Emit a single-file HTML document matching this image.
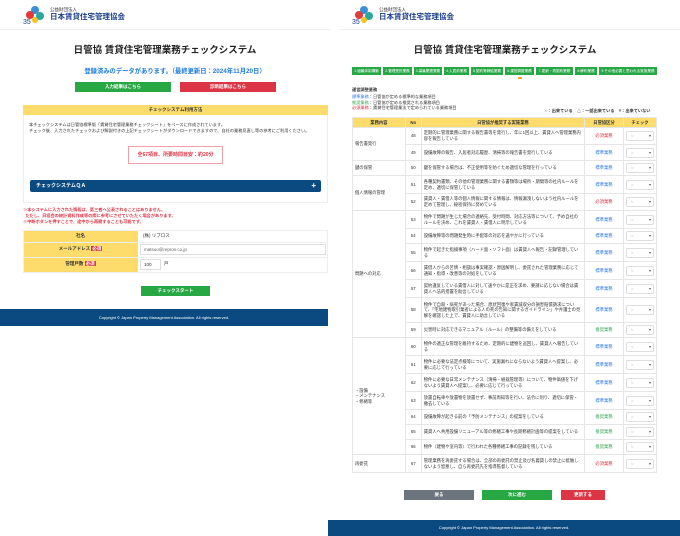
<!DOCTYPE html>
<html><head><meta charset="utf-8"><style>
*{margin:0;padding:0;box-sizing:border-box}
body{width:680px;height:536px;background:#fff;position:relative;overflow:hidden;font-family:"Liberation Sans","Noto Sans CJK JP",sans-serif;color:#333}
.a{position:absolute}
.c{text-align:center}
.hdr{height:30px;border-bottom:1px solid #eee;background:#fff}
.logo{font-size:4.5px;line-height:5px}
.logo b{display:block;font-size:7.5px;line-height:9px;color:#1c3f8c;font-weight:bold}
.title{font-size:9.5px;font-weight:bold;color:#222}
.btn{color:#fff;font-size:4.5px;text-align:center;line-height:10px;font-weight:bold}
.t{font-size:4.5px;line-height:6px}
.foot{background:#0b4a80;color:#fff;font-size:4px;text-align:center;line-height:17px}
table{border-collapse:collapse;position:absolute}
td,th{border:1px solid #e6e6e6;font-size:4.3px;line-height:5.6px;padding:0 2px;vertical-align:middle}
th{background:#fddc6c;font-weight:bold;text-align:center}
.sel{display:block;width:28px;height:10px;border:1px solid #ddd;border-radius:2px;font-size:4px;line-height:8px;padding-left:4px;color:#999;position:relative}
.sel:after{content:"▾";position:absolute;right:2px;top:0;color:#555}
.std{color:#2f7ae5}.rec{color:#3aa655}.req{color:#dc3545}
.tab{position:absolute;top:67px;height:8px;background:#28a745;color:#fff;font-size:3.6px;line-height:8px;text-align:center;white-space:nowrap;overflow:hidden}
</style></head><body>
<!-- LEFT PANEL -->
<div class="a hdr" style="left:0;top:0;width:330px"></div>
<svg class="a" style="left:22px;top:4px" width="26" height="22" viewBox="0 0 26 22"><circle cx="13" cy="6" r="4" fill="#3a8fd8"/><circle cx="8" cy="11" r="4" fill="#e23a3a"/><circle cx="18" cy="12" r="4" fill="#2ba5a0"/><circle cx="13" cy="16" r="3" fill="#f5c518"/><text x="1" y="20" font-size="7" fill="#1c3f8c" font-family="Liberation Sans">35</text></svg>
<div class="a logo" style="left:50px;top:7px">公益財団法人<b>日本賃貸住宅管理協会</b></div>
<div class="a title c" style="left:0;top:42px;width:330px">日管協 賃貸住宅管理業務チェックシステム</div>
<div class="a c" style="left:0;top:66px;width:350px;font-size:6.3px;font-weight:bold;color:#1e7be0">登録済みのデータがあります。（最終更新日：2024年11月20日）</div>
<div class="a btn" style="left:75px;top:82px;width:96px;background:#28a745">入力結果はこちら</div>
<div class="a btn" style="left:180px;top:82px;width:96px;background:#dc3545">診断結果はこちら</div>
<div class="a" style="left:23px;top:105px;width:305px;height:98px;border:1px solid #eee"></div>
<div class="a c t" style="left:23px;top:105px;width:305px;height:10px;line-height:10px;background:#fddc6c;font-weight:bold">チェックシステム利用方法</div>
<div class="a t" style="left:29px;top:122px;width:295px;font-size:4.2px">本チェックシステムは日管協標準版「賃貸住宅管理業務チェックシート」をベースに作成されています。<br>チェック後、入力されたチェックおよび解説付きの上記チェックシートがダウンロードできますので、自社の業務見直し等の参考にご利用ください。</div>
<div class="a c" style="left:128px;top:146px;width:95px;height:18px;border:1px solid #f2a0a8;color:#dc3545;font-size:5px;line-height:16px;font-weight:bold">全67項目、所要時間目安：約20分</div>
<div class="a" style="left:30px;top:180px;width:291px;height:12px;background:#0b4a80;border-radius:2px;color:#fff;font-size:5px;font-weight:bold;line-height:12px;padding-left:6px">チェックシステムＱＡ<span style="position:absolute;right:5px;font-size:8px">+</span></div>
<div class="a t" style="left:23px;top:207px;color:#dc3545;font-size:4.2px;font-weight:bold">※本システムに入力された情報は、第三者へ公表されることはありません。<br>&nbsp;&nbsp;ただし、日協会の統計資料作成等の際に参考にさせていただく場合があります。<br>※中断ボタンを押すことで、途中から再開することも可能です。</div>
<div class="a" style="left:23px;top:230px;width:115px;height:43px;background:#fddc6c"></div>
<div class="a" style="left:23px;top:230px;width:305px;height:43px;border:1px solid #eee"></div>
<div class="a" style="left:23px;top:242px;width:305px;border-top:1px solid #eee"></div>
<div class="a" style="left:23px;top:257px;width:305px;border-top:1px solid #eee"></div>
<div class="a t c" style="left:23px;top:233px;width:115px;font-weight:bold">社名</div>
<div class="a t c" style="left:23px;top:246px;width:115px;font-weight:bold">メールアドレス <span style="background:#dc3545;color:#fff;padding:0 1px">必須</span></div>
<div class="a t c" style="left:23px;top:261px;width:115px;font-weight:bold">管理戸数 <span style="background:#dc3545;color:#fff;padding:0 1px">必須</span></div>
<div class="a t" style="left:143px;top:233px">(株) リブロス</div>
<div class="a t" style="left:140px;top:244px;width:186px;height:11px;border:1px solid #ddd;line-height:9px;padding-left:3px;color:#666">matsuo@repros.co.jp</div>
<div class="a t" style="left:140px;top:259px;width:21px;height:11px;border:1px solid #ddd;line-height:9px;padding-left:3px">100</div>
<div class="a t" style="left:164px;top:261px">戸</div>
<div class="a btn" style="left:141px;top:286px;width:69px;background:#28a745">チェックスタート</div>
<div class="a foot" style="left:0;top:309px;width:328px">Copyright © Japan Property Management Association. All rights reserved.</div>

<!-- RIGHT PANEL -->
<div class="a hdr" style="left:340px;top:0;width:340px"></div>
<svg class="a" style="left:351px;top:4px" width="26" height="22" viewBox="0 0 26 22"><circle cx="13" cy="6" r="4" fill="#3a8fd8"/><circle cx="8" cy="11" r="4" fill="#e23a3a"/><circle cx="18" cy="12" r="4" fill="#2ba5a0"/><circle cx="13" cy="16" r="3" fill="#f5c518"/><text x="1" y="20" font-size="7" fill="#1c3f8c" font-family="Liberation Sans">35</text></svg>
<div class="a logo" style="left:379px;top:7px">公益財団法人<b>日本賃貸住宅管理協会</b></div>
<div class="a title c" style="left:340px;top:42px;width:330px">日管協 賃貸住宅管理業務チェックシステム</div>
<div class="tab" style="left:352px;width:29px">1.組織体制構築</div>
<div class="tab" style="left:383px;width:29px">2.管理受託業務</div>
<div class="tab" style="left:414px;width:28px">3.募集関連業務</div>
<div class="tab" style="left:444px;width:25px">4.入居前業務</div>
<div class="tab" style="left:471px;width:32px">5.契約等締結業務</div>
<div class="tab" style="left:505px;width:29px">6.運営調整業務</div>
<div class="tab" style="left:536px;width:37px">7.更新・再契約業務</div>
<div class="tab" style="left:575px;width:22px">8.解約業務</div>
<div class="tab" style="left:599px;width:58px">9.その他必要と思われる実施業務</div>
<div class="a" style="left:518px;top:77px;width:4px;height:1.5px;background:#f5a623"></div>
<div class="a t" style="left:352px;top:87px;font-size:4.2px;font-weight:bold">運営調整業務</div>
<div class="a t" style="left:352px;top:94px;font-size:4.2px;line-height:5.5px"><span class="std">標準業務</span>：日管協が定める標準的な業務項目<br><span class="rec">推奨業務</span>：日管協が定める推奨される業務項目<br><span class="req">必須業務</span>：賃貸住宅管理業法で定められている業務項目</div>
<div class="a t" style="left:545px;top:108px;font-size:4.2px;font-weight:bold">○：出来ている　△：一部出来ている　×：出来ていない</div>
<table style="left:352px;top:117px;width:305px">
<colgroup><col style="width:53px"><col style="width:16px"><col style="width:164px"><col style="width:39px"><col style="width:33px"></colgroup>
<tr style="height:10px"><th>業務内容</th><th>No</th><th>日管協が推奨する実施業務</th><th>日管協区分</th><th>チェック</th></tr>
<tr style="height:17px"><td rowspan="2">報告書発行</td><td class="c">48</td><td>定期的に管理業務に関する報告書等を発行し、年に1回以上、賃貸人へ管理業務内容を報告している</td><td class="c req">必須業務</td><td><span class="sel">○</span></td></tr>
<tr style="height:16px"><td class="c">49</td><td>設備故障の報告、入居者対応履歴、清掃等の報告書を発行している</td><td class="c std">標準業務</td><td><span class="sel">○</span></td></tr>
<tr style="height:15px"><td>鍵の保管</td><td class="c">50</td><td>鍵を保管する場合は、不正使用等を防ぐため適切な管理を行っている</td><td class="c std">標準業務</td><td><span class="sel">○</span></td></tr>
<tr style="height:18px"><td rowspan="2">個人情報の管理</td><td class="c">51</td><td>各種契約書類、その他の管理業務に関する書類等は場所・期間等の社内ルールを定め、適切に保管している</td><td class="c std">標準業務</td><td><span class="sel">○</span></td></tr>
<tr style="height:17px"><td class="c">52</td><td>賃貸人・賃借人等の個人情報に関する情報は、情報漏洩しないよう社内ルールを定めて管理し、秘密保持に努めている</td><td class="c req">必須業務</td><td><span class="sel">○</span></td></tr>
<tr style="height:18px"><td rowspan="7">問題への対応</td><td class="c">53</td><td>物件で問題が生じた場合の連絡先、受付時間、対応方法等について、予め自社のルールを決め、これを賃貸人・賃借人に明示している</td><td class="c std">標準業務</td><td><span class="sel">○</span></td></tr>
<tr style="height:15px"><td class="c">54</td><td>設備故障等の問題発生時に手配等の対応を速やかに行っている</td><td class="c std">標準業務</td><td><span class="sel">○</span></td></tr>
<tr style="height:18px"><td class="c">55</td><td>物件で起きた指摘事項（ハード面・ソフト面）は賃貸人へ報告・記録管理している</td><td class="c std">標準業務</td><td><span class="sel">○</span></td></tr>
<tr style="height:18px"><td class="c">56</td><td>賃借人からの苦情・相談は事実確認・原因解明し、委託された管理業務に応じて通知・指導・改善等の対処をしている</td><td class="c std">標準業務</td><td><span class="sel">○</span></td></tr>
<tr style="height:18px"><td class="c">57</td><td>契約違反している賃借人に対して速やかに是正を求め、要請に応じない場合は賃貸人へ法的措置を助言している</td><td class="c std">標準業務</td><td><span class="sel">○</span></td></tr>
<tr style="height:25px"><td class="c">58</td><td>物件で自殺・病死があった場合、原状回復や家賃減収分の損害賠償請求について、「宅地建物取引業者による人の死の告知に関するガイドライン」や弁護士の見解を確認した上で、賃貸人に助言している</td><td class="c std">標準業務</td><td><span class="sel">○</span></td></tr>
<tr style="height:15px"><td class="c">59</td><td>災害時に対応できるマニュアル（ルール）の整備等の備えをしている</td><td class="c rec">推奨業務</td><td><span class="sel">○</span></td></tr>
<tr style="height:18px"><td rowspan="7">・設備<br>・メンテナンス<br>・修繕等</td><td class="c">60</td><td>物件の適正な管理を維持するため、定期的に建物を巡回し、賃貸人へ報告している</td><td class="c std">標準業務</td><td><span class="sel">○</span></td></tr>
<tr style="height:18px"><td class="c">61</td><td>物件に必要な法定点検等について、実施漏れにならないよう賃貸人へ提案し、必要に応じて行っている</td><td class="c std">標準業務</td><td><span class="sel">○</span></td></tr>
<tr style="height:18px"><td class="c">62</td><td>物件に必要な日常メンテナンス（清掃・植栽管理等）について、物件価値を下げないよう賃貸人へ提案し、必要に応じて行っている</td><td class="c std">標準業務</td><td><span class="sel">○</span></td></tr>
<tr style="height:18px"><td class="c">63</td><td>放置自転車や放置物を放置せず、事前周知等を行い、法令に則り、適切に保管・撤去している</td><td class="c std">標準業務</td><td><span class="sel">○</span></td></tr>
<tr style="height:15px"><td class="c">64</td><td>設備故障が起きる前の「予防メンテナンス」の提案をしている</td><td class="c rec">推奨業務</td><td><span class="sel">○</span></td></tr>
<tr style="height:15px"><td class="c">65</td><td>賃貸人へ共用設備リニューアル等の修繕工事や長期修繕計画等の提案をしている</td><td class="c rec">推奨業務</td><td><span class="sel">○</span></td></tr>
<tr style="height:15px"><td class="c">66</td><td>物件（建物や室内等）で行われた各種修繕工事の記録を残している</td><td class="c rec">推奨業務</td><td><span class="sel">○</span></td></tr>
<tr style="height:18px"><td>再委託</td><td class="c">67</td><td>管理業務を再委託する場合は、全部の再委託の禁止及び名義貸しの禁止に抵触しないよう留意し、自ら再委託先を指導監督している</td><td class="c req">必須業務</td><td><span class="sel">○</span></td></tr>
</table>
<div class="a btn" style="left:404px;top:490px;width:70px;background:#6c757d">戻る</div>
<div class="a btn" style="left:482px;top:490px;width:70px;background:#28a745">次に進む</div>
<div class="a btn" style="left:561px;top:490px;width:44px;background:#dc3545">更新する</div>
<div class="a foot" style="left:328px;top:520px;width:352px;line-height:16px">Copyright © Japan Property Management Association. All rights reserved.</div>
</body></html>
